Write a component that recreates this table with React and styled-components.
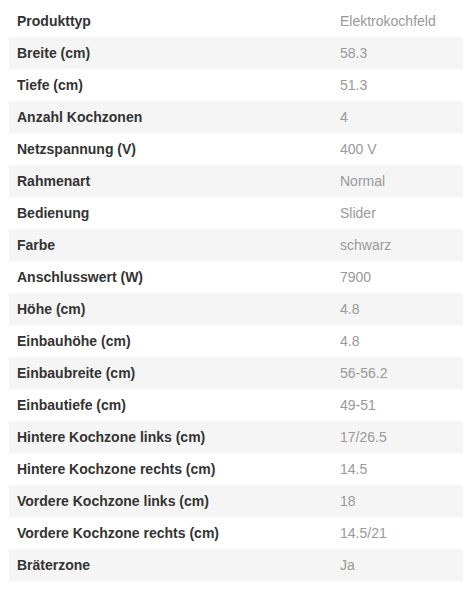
import React from "react";
import styled, { createGlobalStyle } from "styled-components";

const GlobalStyle = createGlobalStyle`
  body {
    margin: 0;
    background: #fff;
    font-family: "Liberation Sans", Arial, sans-serif;
  }
`;

const Wrapper = styled.div`
  padding: 5px 0 10px 9px;
`;

const SpecTable = styled.table`
  width: 454px;
  border-collapse: collapse;
  border-spacing: 0;
  table-layout: fixed;
  font-size: 14px;
`;

const Row = styled.tr`
  background: ${props => (props.odd ? "#f5f5f5" : "#fff")};
  height: 32px;
`;

const Label = styled.th`
  width: 307px;
  padding: 0 8px;
  text-align: left;
  font-weight: bold;
  color: #333;
  vertical-align: middle;
`;

const Value = styled.td`
  padding: 0 8px;
  color: #999;
  vertical-align: middle;
`;

const specs = [
  ["Produkttyp", "Elektrokochfeld"],
  ["Breite (cm)", "58.3"],
  ["Tiefe (cm)", "51.3"],
  ["Anzahl Kochzonen", "4"],
  ["Netzspannung (V)", "400 V"],
  ["Rahmenart", "Normal"],
  ["Bedienung", "Slider"],
  ["Farbe", "schwarz"],
  ["Anschlusswert (W)", "7900"],
  ["Höhe (cm)", "4.8"],
  ["Einbauhöhe (cm)", "4.8"],
  ["Einbaubreite (cm)", "56-56.2"],
  ["Einbautiefe (cm)", "49-51"],
  ["Hintere Kochzone links (cm)", "17/26.5"],
  ["Hintere Kochzone rechts (cm)", "14.5"],
  ["Vordere Kochzone links (cm)", "18"],
  ["Vordere Kochzone rechts (cm)", "14.5/21"],
  ["Bräterzone", "Ja"]
];

export default function App() {
  return (
    <Wrapper>
      <GlobalStyle />
      <SpecTable>
        <tbody>
          {specs.map(([label, value], i) => (
            <Row key={label} odd={i % 2 === 1}>
              <Label>{label}</Label>
              <Value>{value}</Value>
            </Row>
          ))}
        </tbody>
      </SpecTable>
    </Wrapper>
  );
}
